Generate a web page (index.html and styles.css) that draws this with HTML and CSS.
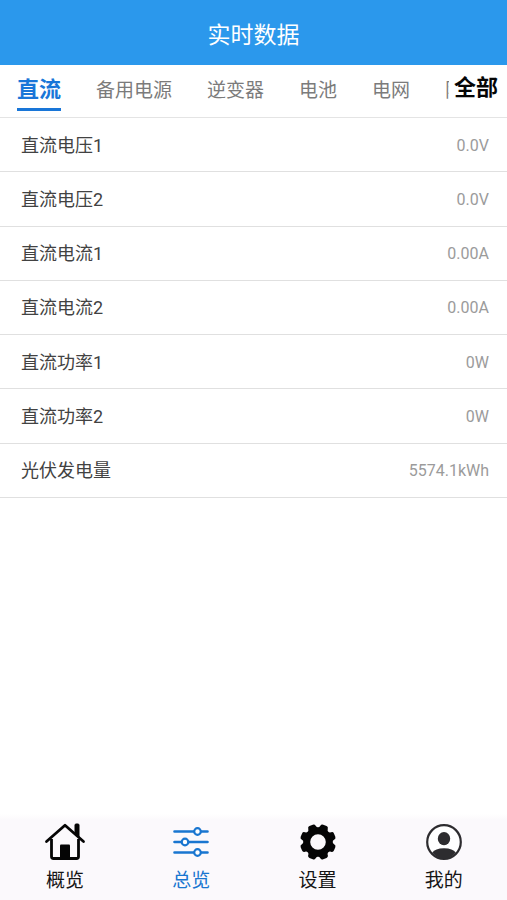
FILE: index.html
```html
<!DOCTYPE html>
<html lang="zh-CN">
<head>
<meta charset="utf-8">
<meta name="viewport" content="width=device-width, initial-scale=1">
<title>实时数据</title>
<link rel="stylesheet" href="styles.css">
</head>
<body>
<header class="header"><h1 class="title">实时数据</h1></header>
<div class="tabbar">
  <nav class="tabs">
    <a class="tab tab-active" href="#dc">直流</a>
    <a class="tab" href="#backup">备用电源</a>
    <a class="tab" href="#inverter">逆变器</a>
    <a class="tab" href="#battery">电池</a>
    <a class="tab" href="#grid">电网</a>
    <a class="tab" href="#array">阵列</a>
  </nav>
  <button class="all" type="button">全部</button>
</div>
<main class="main">
  <dl class="list">
    <div class="row"><dt>直流电压1</dt><dd>0.0V</dd></div>
    <div class="row"><dt>直流电压2</dt><dd>0.0V</dd></div>
    <div class="row"><dt>直流电流1</dt><dd>0.00A</dd></div>
    <div class="row"><dt>直流电流2</dt><dd>0.00A</dd></div>
    <div class="row"><dt>直流功率1</dt><dd>0W</dd></div>
    <div class="row"><dt>直流功率2</dt><dd>0W</dd></div>
    <div class="row"><dt>光伏发电量</dt><dd>5574.1kWh</dd></div>
  </dl>
</main>
<nav class="bottom">
  <a class="item" href="#overview">
    <svg class="icon" viewBox="0 0 42 38" aria-hidden="true">
      <path d="M31 3Q31 2 32 2H34Q35 2 35 3V15L31 11Z" fill="#050505" stroke="#050505"/>
      <path d="M2.500 19.500 21 3.200 39.500 19.500" fill="none" stroke="#050505" stroke-width="2.800" stroke-linecap="round" stroke-linejoin="round"/>
      <path d="M7.500 17V34.500Q7.500 36.500 9.500 36.500H32.500Q34.500 36.500 34.500 34.500V17" fill="none" stroke="#050505" stroke-width="2.800"/>
      <path d="M16 36V23.500Q16 22.500 17 22.500H25Q26 22.500 26 23.500V36Z" fill="#050505"/>
    </svg>
    <span>概览</span>
  </a>
  <a class="item item-active" href="#summary">
    <svg class="icon" viewBox="0 0 42 38" aria-hidden="true">
      <g fill="none" stroke="#1976d0" stroke-width="2.600" stroke-linecap="round">
        <path d="M4.500 9.500H37.500M4.500 20H37.500M4.500 30.500H37.500"/>
        <g fill="#fff" stroke-width="2.200"><circle cx="27.500" cy="9.500" r="3.300"/><circle cx="15" cy="20" r="3.300"/><circle cx="27.500" cy="30.500" r="3.300"/></g>
      </g>
    </svg>
    <span>总览</span>
  </a>
  <a class="item" href="#settings">
    <svg class="icon" viewBox="0 0 42 38" aria-hidden="true">
      <g transform="translate(21 20)" fill="#050505">
        <circle r="11.200" fill="none" stroke="#050505" stroke-width="6.800"/>
        <path id="tooth" transform="rotate(22.500)" d="M-5.800-13Q-4.200-14-4-15.800Q-3.800-18-1.800-18H1.800Q3.800-18 4-15.800Q4.200-14 5.800-13Z"/>
        <use href="#tooth" transform="rotate(45)"/><use href="#tooth" transform="rotate(90)"/><use href="#tooth" transform="rotate(135)"/><use href="#tooth" transform="rotate(180)"/><use href="#tooth" transform="rotate(225)"/><use href="#tooth" transform="rotate(270)"/><use href="#tooth" transform="rotate(315)"/>
      </g>
    </svg>
    <span>设置</span>
  </a>
  <a class="item" href="#me">
    <svg class="icon" viewBox="0 0 42 38" aria-hidden="true">
      <circle cx="21" cy="20" r="16.800" fill="#fff" stroke="#2d2c2f" stroke-width="2.200"/>
      <ellipse cx="21" cy="16.700" rx="6.200" ry="6.600" fill="#2d2c2f"/>
      <path d="M9.300 30.500Q12 26.500 21 26.300Q30 26.500 32.700 30.500Q28 36.500 21 36.500Q14 36.500 9.300 30.500Z" fill="#2d2c2f"/>
    </svg>
    <span>我的</span>
  </a>
</nav>
</body>
</html>
```
FILE: styles.css
```css
* { box-sizing: border-box; }

body {
  margin: 0;
  min-height: 100vh;
  display: flex;
  flex-direction: column;
  background: #fff;
  color: #424242;
  font-family: Roboto, "Noto Sans CJK SC", sans-serif;
}

a { color: inherit; text-decoration: none; }

.header {
  height: 65px;
  display: flex;
  align-items: center;
  justify-content: center;
  padding-top: 7px;
  background: #2b98ec;
  color: #fff;
}

.title { margin: 0; font-size: 23px; font-weight: 400; line-height: 32px; }

.tabbar {
  display: flex;
  height: 53px;
  border-bottom: 1px solid #e4e4e4;
}

.tabs {
  flex: 1;
  min-width: 0;
  display: flex;
  gap: 35px;
  padding-left: 17px;
  overflow: hidden;
  white-space: nowrap;
}

.tab {
  flex: none;
  height: 46px;
  font-size: 19px;
  line-height: 52px;
  color: #7b7b7b;
}

.tab-active {
  border-bottom: 3px solid #1976d8;
  font-size: 22px;
  line-height: 50px;
  font-weight: 700;
  color: #1976d8;
}

.all {
  height: 46px;
  margin: 0 9px 0 0;
  padding: 0 0 0 5px;
  border: 0;
  background: #fff;
  color: #050505;
  font: 700 22px/46px Roboto, "Noto Sans CJK SC", sans-serif;
}

.main { flex: 1; }

.list {
  display: grid;
  grid-auto-rows: 1fr;
  min-height: 380px;
  margin: 0;
}

.row {
  display: flex;
  align-items: center;
  justify-content: space-between;
  padding: 2px 18px 0 21px;
  border-bottom: 1px solid #e0e0e0;
  line-height: 24px;
}

.row dt { font-size: 18px; }
.row dd { margin: 0; font-size: 16px; color: #9b9b9b; }

.bottom {
  display: grid;
  grid-template-columns: repeat(4, 1fr);
  height: 86px;
  padding: 8px 0 0 2px;
  background: linear-gradient(#fff, #fbf9fc 6px);
}

.item {
  display: flex;
  flex-direction: column;
  align-items: center;
  color: #151515;
  font-size: 19px;
  line-height: 42px;
}

.item-active { color: #1976d0; }
.icon { flex: none; width: 42px; height: 38px; }
```
